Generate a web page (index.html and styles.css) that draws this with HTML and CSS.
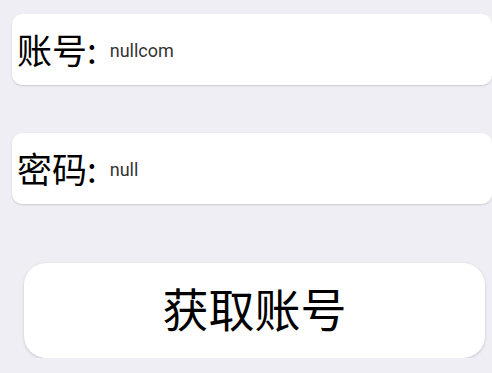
FILE: index.html
```html
<!DOCTYPE html>
<html lang="zh">
<head>
    <meta charset="UTF-8">
    <meta name="viewport" content="width=device-width, initial-scale=1.0">
    <title>获取账号</title>
    <link rel="stylesheet" href="styles.css">
</head>
<body>
    <div class="campo">
        <span class="etiqueta">账号:</span><span class="valor">nullcom</span>
    </div>

    <div class="campo campo-segundo">
        <span class="etiqueta">密码:</span><span class="valor">null</span>
    </div>

    <button class="boton-obtener">获取账号</button>
</body>
</html>
```

FILE: styles.css
```css
body {
    margin: 0;
    padding: 14px 0 0 12px;
    background-color: #efeef4;
    font-family: "Noto Sans CJK SC", sans-serif;
    display: flex;
    flex-direction: column;
    align-items: flex-start;
}

.campo {
    width: 480px;
    height: 71px;
    box-sizing: border-box;
    background-color: #ffffff;
    border-radius: 10px;
    box-shadow: 0 1px 2px rgba(0, 0, 0, 0.15);
    display: flex;
    align-items: center;
    padding-left: 5px;
}

.campo-segundo {
    margin-top: 48px;
}

.etiqueta {
    font-size: 35px;
    color: #000;
    line-height: 1;
    margin-bottom: 3px;
}

.valor {
    font-family: Roboto, "Noto Sans", sans-serif;
    font-size: 18px;
    color: #333;
    margin-left: 13px;
    margin-top: 2px;
}

.boton-obtener {
    margin: 59px 0 0 12px;
    width: 461px;
    height: 95px;
    background-color: #ffffff;
    border: none;
    border-radius: 22px;
    box-shadow: 0 1px 3px rgba(0, 0, 0, 0.18);
    font-family: "Noto Sans CJK SC", sans-serif;
    font-size: 46px;
    line-height: 1;
    color: #000;
    padding: 0 0 8px 0;
    cursor: pointer;
}
```
